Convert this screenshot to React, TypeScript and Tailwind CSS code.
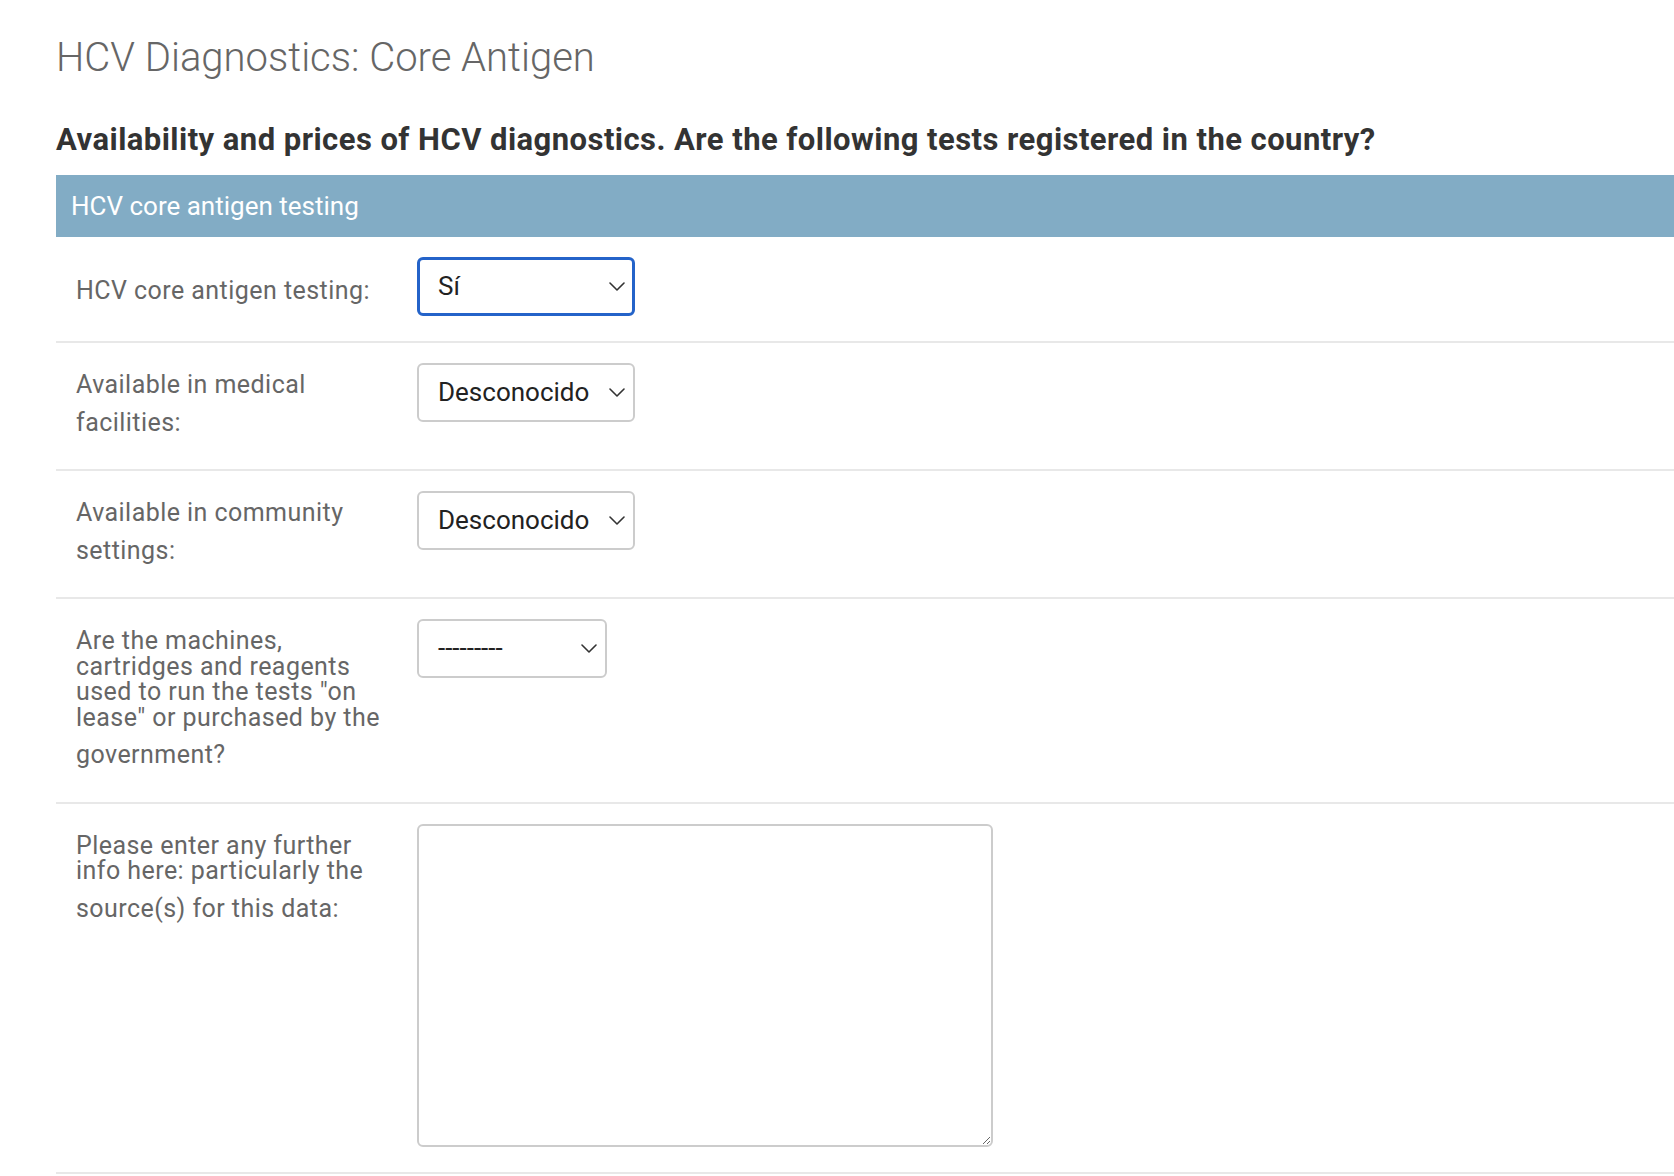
import React from 'react'

type Field = {
  lines: string[]
  control: 'select' | 'textarea'
  value?: string
  focused?: boolean
  narrow?: boolean
}

const fields: Field[] = [
  { lines: ['HCV core antigen testing:'], control: 'select', value: 'Sí', focused: true },
  { lines: ['Available in medical', 'facilities:'], control: 'select', value: 'Desconocido' },
  { lines: ['Available in community', 'settings:'], control: 'select', value: 'Desconocido' },
  {
    lines: [
      'Are the machines,',
      'cartridges and reagents',
      'used to run the tests "on',
      'lease" or purchased by the',
      'government?',
    ],
    control: 'select',
    value: '---------',
    narrow: true,
  },
  {
    lines: ['Please enter any further', 'info here: particularly the', 'source(s) for this data:'],
    control: 'textarea',
  },
]

function Chevron() {
  return (
    <svg width="16" height="9" viewBox="0 0 16 9" fill="none" className="shrink-0">
      <path d="M1 1l7 7 7-7" stroke="#333" strokeWidth="1.6" strokeLinecap="round" strokeLinejoin="round" />
    </svg>
  )
}

function FakeSelect({ value, focused, narrow }: { value?: string; focused?: boolean; narrow?: boolean }) {
  const border = focused ? 'border-[3px] border-[#2463c9] pl-[18px] pr-[7px]' : 'border-2 border-[#ccc] pl-[19px] pr-[8px]'
  const width = narrow ? 'w-[190px]' : 'w-[218px]'
  return (
    <div className={`flex h-[59px] items-center justify-between rounded-[6px] bg-white text-[26px] text-[#222] ${border} ${width}`}>
      <span className="whitespace-nowrap">{value}</span>
      <Chevron />
    </div>
  )
}

function FormRow({ field }: { field: Field }) {
  return (
    <div className="flex border-b-2 border-[#e8e8e8] pl-[20px] pt-[20px] pb-[20px]">
      <div className="w-[341px] shrink-0 pt-[9px] pb-[14px] text-[25px] tracking-[0.45px] text-[#666]">
        {field.lines.map((line, i) => (
          <div
            key={i}
            className={`whitespace-nowrap leading-[25.5px] ${i === field.lines.length - 1 ? 'mt-[12px]' : ''}`}
          >
            {line}
          </div>
        ))}
      </div>
      <div className="mb-[5px]">
        {field.control === 'select' ? (
          <FakeSelect value={field.value} focused={field.focused} narrow={field.narrow} />
        ) : (
          <textarea className="block h-[323px] w-[576px] rounded-[6px] border-2 border-[#ccc] bg-white" />
        )}
      </div>
    </div>
  )
}

export default function App() {
  return (
    <div className="min-h-screen bg-white pl-[56px] font-['Roboto','Liberation_Sans',sans-serif]">
      <h1 className="pt-[34px] text-[40px] font-light leading-[48px] text-[#666]">
        HCV Diagnostics: Core Antigen
      </h1>
      <h2 className="mt-[40px] text-[31px] font-bold leading-[36px] tracking-[0.45px] text-[#333]">
        Availability and prices of HCV diagnostics. Are the following tests registered in the country?
      </h2>
      <div className="mt-[17px]">
        <div className="flex h-[62px] items-center bg-[#82acc5] pl-[15px] text-[26px] text-white">
          HCV core antigen testing
        </div>
        {fields.map((f, i) => (
          <FormRow key={i} field={f} />
        ))}
      </div>
    </div>
  )
}
